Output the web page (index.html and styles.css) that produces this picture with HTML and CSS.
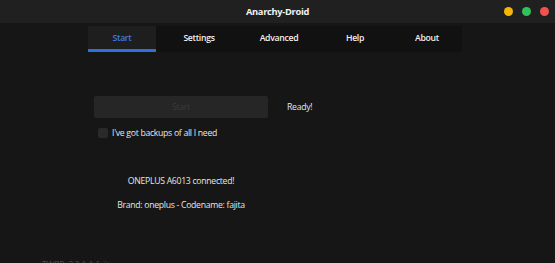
FILE: index.html
```html
<!DOCTYPE html>
<html lang="en">
<head>
<meta charset="UTF-8" />
<title>Anarchy-Droid</title>
<link rel="stylesheet" href="styles.css">
</head>
<body>

<div class="titlebar">
  <span class="title">Anarchy-Droid</span>
  <div class="lights">
    <span class="light yellow"></span>
    <span class="light green"></span>
    <span class="light red"></span>
  </div>
</div>

<div class="tabs">
  <div class="tab active">Start</div>
  <div class="tab">Settings</div>
  <div class="tab">Advanced</div>
  <div class="tab">Help</div>
  <div class="tab">About</div>
</div>

<div class="content">
  <div class="start-row">
    <button class="start-btn" disabled>Start</button>
    <span class="status">Ready!</span>
  </div>
  <label class="check">
    <span class="box"></span>
    I've got backups of all I need
  </label>

  <div class="device">
    <p>ONEPLUS A6013 connected!</p>
    <p>Brand: oneplus - Codename: fajita</p>
  </div>
</div>

<div class="footer">TWRP: 3.3.1-1-fajita</div>

</body>
</html>
```

FILE: styles.css
```css
* {
  box-sizing: border-box;
}
body {
  margin: 0;
  height: 263px;
  overflow: hidden;
  background: #161616;
  color: #e6e6e6;
  font-family: "Open Sans", "Noto Sans", sans-serif;
  font-size: 8.7px;
  letter-spacing: -0.3px;
}

/* Title bar */
.titlebar {
  position: relative;
  height: 23px;
  background: #202020;
  display: flex;
  align-items: center;
  justify-content: center;
}
.title {
  font-weight: bold;
  font-size: 9.3px;
  color: #f2f2f2;
}
.lights {
  position: absolute;
  right: 6px;
  top: 7px;
  display: flex;
  gap: 9px;
}
.light {
  width: 9px;
  height: 9px;
  border-radius: 50%;
}
.yellow { background: #f4b400; }
.green { background: #2fc15b; }
.red { background: #ef5350; }

/* Tabs */
.tabs {
  display: flex;
  margin: 3px 0 0 88px;
  width: 374px;
  height: 26px;
  background: #111111;
}
.tab {
  display: flex;
  align-items: center;
  justify-content: center;
  font-weight: 600;
  color: #f0f0f0;
  border-bottom: 3px solid transparent;
}
.tab:nth-child(1) { width: 68px; }
.tab:nth-child(2) { width: 86px; }
.tab:nth-child(3) { width: 74px; }
.tab:nth-child(4) { width: 78px; }
.tab:nth-child(5) { width: 66px; }
.tab.active {
  background: #1e1e1e;
  color: #3d7be0;
  border-bottom-color: #2f6fe0;
}

/* Content */
.content {
  padding: 44px 0 0 94px;
}
.start-row {
  display: flex;
  align-items: center;
  gap: 19px;
}
.start-btn {
  width: 174px;
  height: 22px;
  border: none;
  border-radius: 2px;
  background: #262626;
  color: #3a3a3a;
  font-family: inherit;
  font-size: 8.7px;
  letter-spacing: -0.3px;
}
.check {
  display: flex;
  align-items: center;
  gap: 4px;
  margin: 9px 0 0 4px;
}
.box {
  width: 10px;
  height: 10px;
  border-radius: 2px;
  background: #2a2a2a;
}
.device {
  width: 174px;
  text-align: center;
  margin-top: 36px;
}
.device p {
  margin: 0 0 12px;
}

.footer {
  position: absolute;
  left: 42px;
  top: 259px;
  color: #4a4a4a;
}
```
